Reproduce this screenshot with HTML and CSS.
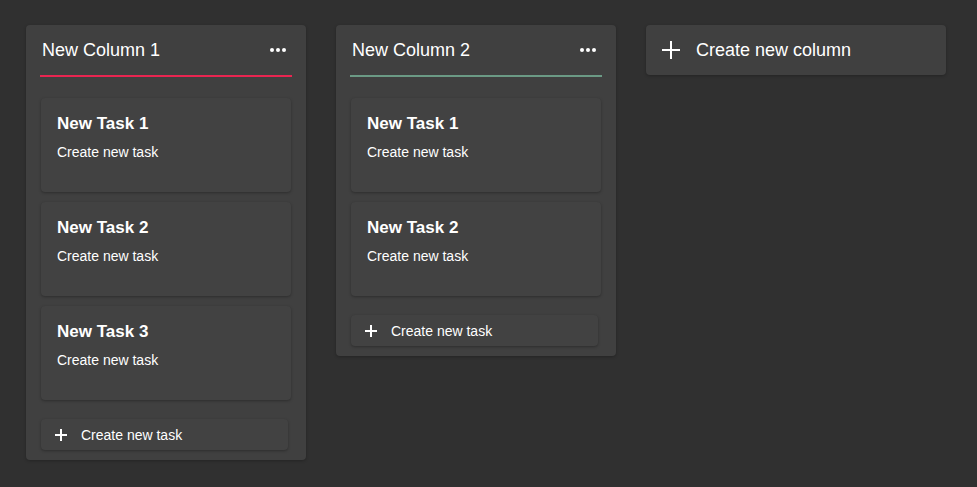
FILE: index.html
```html
<!DOCTYPE html>
<html lang="en">
<head>
<meta charset="utf-8">
<title>Board</title>
<link rel="stylesheet" href="styles.css">
</head>
<body>
<div class="board">
  <section class="column">
    <header class="col-head">
      <h2 class="col-title">New Column 1</h2>
      <button class="dots" aria-label="More"><span></span><span></span><span></span></button>
    </header>
    <div class="col-line red"></div>
    <div class="tasks">
      <article class="task"><h3>New Task 1</h3><p>Create new task</p></article>
      <article class="task"><h3>New Task 2</h3><p>Create new task</p></article>
      <article class="task"><h3>New Task 3</h3><p>Create new task</p></article>
    </div>
    <button class="add-task">
      <svg class="plus-sm" viewBox="0 0 12 12" width="12" height="12"><path d="M6 0v12M0 6h12" stroke="#fff" stroke-width="2"/></svg>
      <span>Create new task</span>
    </button>
  </section>

  <section class="column">
    <header class="col-head">
      <h2 class="col-title">New Column 2</h2>
      <button class="dots" aria-label="More"><span></span><span></span><span></span></button>
    </header>
    <div class="col-line green"></div>
    <div class="tasks">
      <article class="task"><h3>New Task 1</h3><p>Create new task</p></article>
      <article class="task"><h3>New Task 2</h3><p>Create new task</p></article>
    </div>
    <button class="add-task">
      <svg class="plus-sm" viewBox="0 0 12 12" width="12" height="12"><path d="M6 0v12M0 6h12" stroke="#fff" stroke-width="2"/></svg>
      <span>Create new task</span>
    </button>
  </section>

  <button class="add-column">
    <svg class="plus-lg" viewBox="0 0 18 18" width="18" height="18"><path d="M9 0v18M0 9h18" stroke="#fff" stroke-width="2"/></svg>
    <span>Create new column</span>
  </button>
</div>
</body>
</html>
```

FILE: styles.css
```css
* { box-sizing: border-box; }
html, body { margin: 0; padding: 0; }
body {
  background: #303030;
  font-family: "Liberation Sans", Arial, sans-serif;
  color: #fff;
  width: 977px;
  height: 487px;
  overflow: hidden;
}
.board {
  display: flex;
  align-items: flex-start;
  gap: 30px;
  padding: 25px 0 0 26px;
}
.column {
  width: 280px;
  background: #404040;
  border-radius: 4px;
  padding: 0 15px 10px 15px;
  display: flex;
  flex-direction: column;
  box-shadow: 0 1px 3px rgba(0,0,0,0.25);
}
.col-head {
  height: 50px;
  display: flex;
  align-items: center;
  justify-content: space-between;
  padding: 0 5px 0 1px;
}
.col-title {
  margin: 0;
  font-size: 18px;
  font-weight: normal;
  line-height: 21px;
}
.dots {
  background: none;
  border: 0;
  padding: 0;
  display: flex;
  gap: 1.5px;
  cursor: pointer;
}
.dots span {
  width: 4.5px;
  height: 4.5px;
  border-radius: 50%;
  background: #fff;
}
.col-line {
  height: 2px;
  margin: 0 -1px;
}
.col-line.red { background: #ea2551; }
.col-line.green { background: #6b9a85; }
.tasks {
  display: flex;
  flex-direction: column;
  gap: 10px;
  padding-top: 21px;
}
.task {
  height: 94px;
  background: #424242;
  border-radius: 4px;
  padding: 17px 16px 0 16px;
  box-shadow: 0 1px 3px rgba(0,0,0,0.3);
}
.task h3 {
  margin: 0;
  font-size: 17px;
  font-weight: bold;
  line-height: 18px;
}
.task p {
  margin: 11px 0 0;
  font-size: 14px;
  line-height: 16px;
}
.add-task {
  margin-top: 19px;
  margin-right: 3px;
  height: 31px;
  background: #424242;
  border: 0;
  border-radius: 4px;
  box-shadow: 0 1px 3px rgba(0,0,0,0.3);
  color: #fff;
  font-family: inherit;
  font-size: 14px;
  display: flex;
  align-items: center;
  padding: 0 0 0 14px;
  gap: 14px;
  cursor: pointer;
}
.plus-sm { display: block; }
.add-column {
  width: 300px;
  height: 50px;
  background: #404040;
  border: 0;
  border-radius: 4px;
  box-shadow: 0 1px 3px rgba(0,0,0,0.25);
  color: #fff;
  font-family: inherit;
  font-size: 18px;
  display: flex;
  align-items: center;
  gap: 16px;
  padding: 0 0 0 16px;
  cursor: pointer;
}
.plus-lg { display: block; }
```
